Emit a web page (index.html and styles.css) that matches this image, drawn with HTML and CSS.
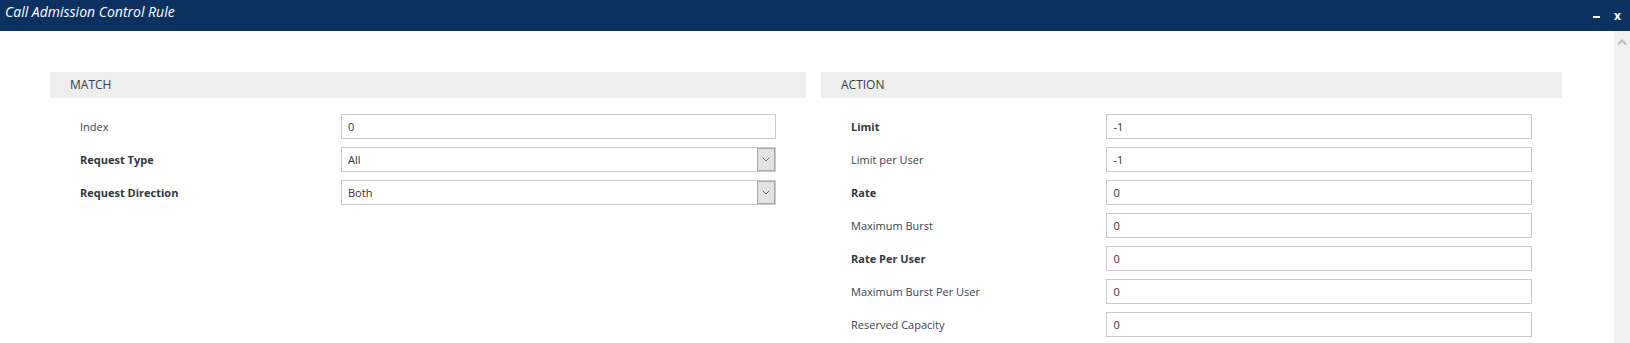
FILE: index.html
```html
<!DOCTYPE html>
<html>
<head>
<meta charset="utf-8">
<title>Call Admission Control Rule</title>
<link rel="stylesheet" href="styles.css">
</head>
<body>
<div class="titlebar">
  <div class="title">Call Admission Control Rule</div>
  <div class="controls">
    <span class="minimize"></span>
    <span class="close">x</span>
  </div>
</div>
<div class="main">
  <div class="content">
    <div class="sections">
      <section class="panel">
        <div class="panel-head">MATCH</div>
        <div class="rows">
          <div class="row"><label class="lbl">Index</label><input class="field" value="0"></div>
          <div class="row"><label class="lbl bold">Request Type</label><div class="field select"><span>All</span><span class="arrow"><svg width="8" height="5" viewBox="0 0 8 5"><path d="M0.5 0.5 L4 4 L7.5 0.5" fill="none" stroke="#666" stroke-width="1"/></svg></span></div></div>
          <div class="row"><label class="lbl bold">Request Direction</label><div class="field select"><span>Both</span><span class="arrow"><svg width="8" height="5" viewBox="0 0 8 5"><path d="M0.5 0.5 L4 4 L7.5 0.5" fill="none" stroke="#666" stroke-width="1"/></svg></span></div></div>
        </div>
      </section>
      <section class="panel">
        <div class="panel-head">ACTION</div>
        <div class="rows">
          <div class="row"><label class="lbl bold">Limit</label><input class="field" value="-1"></div>
          <div class="row"><label class="lbl">Limit per User</label><input class="field" value="-1"></div>
          <div class="row"><label class="lbl bold">Rate</label><input class="field" value="0"></div>
          <div class="row"><label class="lbl">Maximum Burst</label><input class="field" value="0"></div>
          <div class="row"><label class="lbl bold">Rate Per User</label><input class="field" value="0"></div>
          <div class="row"><label class="lbl">Maximum Burst Per User</label><input class="field" value="0"></div>
          <div class="row"><label class="lbl">Reserved Capacity</label><input class="field" value="0"></div>
        </div>
      </section>
    </div>
  </div>
  <div class="scrollbar">
    <svg class="up" width="10" height="6" viewBox="0 0 10 6"><path d="M1 5.5 L5 1.5 L9 5.5" fill="none" stroke="#bdbdbd" stroke-width="2"/></svg>
  </div>
</div>
</body>
</html>
```
FILE: styles.css
```css
* { box-sizing: border-box; }
html, body { margin: 0; padding: 0; }
body {
  width: 1630px;
  height: 343px;
  overflow: hidden;
  font-family: "Open Sans", "Liberation Sans", sans-serif;
  background: #fff;
  color: #333c47;
}
.titlebar {
  height: 31px;
  background: #0a3160;
  display: flex;
  justify-content: space-between;
  align-items: flex-start;
}
.title {
  color: #fff;
  font-style: italic;
  font-size: 14px;
  line-height: 19px;
  padding: 2px 0 0 5px;
}
.controls {
  display: flex;
  align-items: center;
  height: 31px;
  padding-right: 9px;
  color: #fff;
}
.minimize {
  width: 7px;
  height: 2px;
  background: #fff;
  margin-top: 3px;
  margin-right: 14px;
}
.close {
  font-size: 12px;
  font-weight: bold;
  line-height: 12px;
  margin-top: 1px;
}
.main {
  display: flex;
  height: 312px;
}
.content {
  flex: 1;
  padding: 41px 0 0 50px;
}
.sections {
  display: grid;
  grid-template-columns: 756px 741px;
  column-gap: 15px;
}
.panel-head {
  height: 26px;
  line-height: 26px;
  background: #eeeeee;
  font-size: 12px;
  padding-left: 20px;
  color: #34404c;
}
.rows {
  padding: 16px 30px 0 30px;
  display: flex;
  flex-direction: column;
  gap: 8px;
}
.row {
  display: grid;
  grid-template-columns: 37.5% 1fr;
  align-items: center;
  height: 25px;
}
.lbl {
  font-size: 11px;
  color: #3a4450;
}
.bold { font-weight: bold; color: #2f3842; }
.field {
  height: 25px;
  border: 1px solid #c6cad2;
  background: #fff;
  font-family: "Open Sans", "Liberation Sans", sans-serif;
  font-size: 11px;
  color: #333;
  padding: 0 6px;
  margin: 0;
  outline: none;
  width: 100%;
}
.select {
  display: flex;
  align-items: center;
  justify-content: space-between;
  padding: 0 0 0 6px;
}
.arrow {
  width: 18px;
  height: 23px;
  background: #e3e3e3;
  border: 1px solid #a9a9a9;
  display: flex;
  align-items: center;
  justify-content: center;
}
.scrollbar {
  width: 16px;
  background: #f0f0f0;
  display: flex;
  justify-content: center;
  align-items: flex-start;
}
.up { margin-top: 8px; }
```
